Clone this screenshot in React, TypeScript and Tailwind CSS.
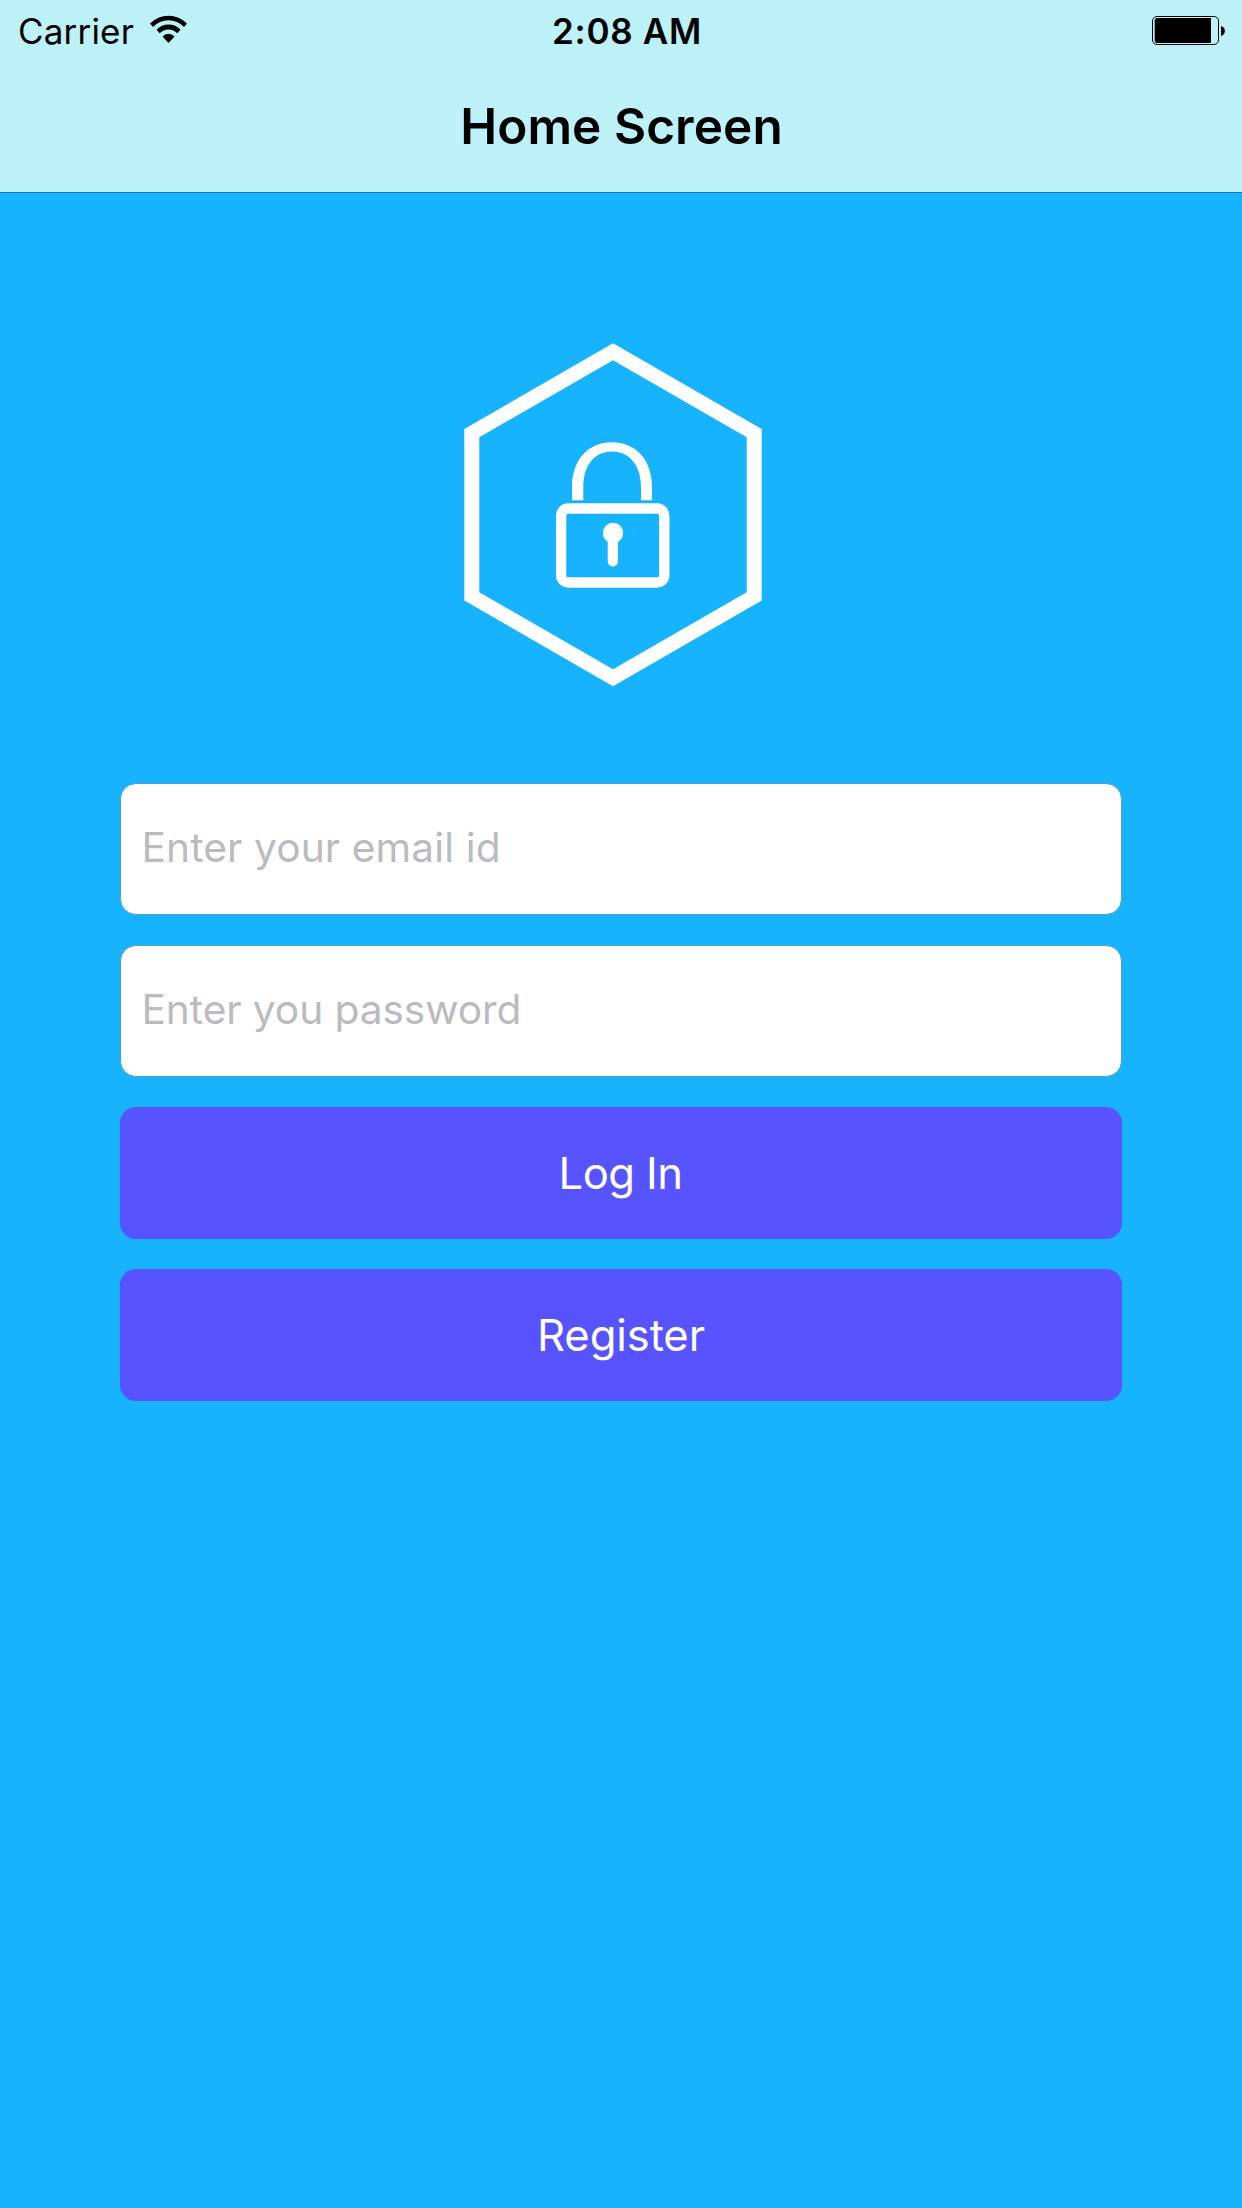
import React from 'react';

function WifiIcon() {
  return (
    <svg className="mt-[15px] ml-[15px] h-[29px] w-[39px]" viewBox="149 15 39 29" fill="#000">
      <path d="M150 23.5A25.8 25.8 0 0 1 187 23.5L184 27A21.2 21.2 0 0 0 153 27Z" />
      <path d="M156.5 29.8A16 16 0 0 1 180.5 29.8L177.3 33.3A12 12 0 0 0 159.7 33.3Z" />
      <path d="M162.5 36.5A8 8 0 0 1 174.5 36.5L168.5 43Z" />
    </svg>
  );
}

function BatteryIcon() {
  return (
    <svg className="mt-[15px] mr-4 h-[31px] w-[75px]" viewBox="1151 15 75 31" fill="#000">
      <rect x="1152.5" y="16.5" width="66" height="28" rx="4.5" fill="none" stroke="#000" />
      <path d="M1157 18H1211V43H1157Q1154.7 43 1154.7 40.5V20.5Q1154.7 18 1157 18Z" />
      <path d="M1221 26C1226.2 27.2 1226.2 34.8 1221 36Z" />
    </svg>
  );
}

function LockBadge() {
  return (
    <svg className="mr-4 h-[346px] w-[302px]" viewBox="462 342 302 346" fill="#fff">
      <path
        fillRule="evenodd"
        d="M613 343.3L761.7 429V600.5L613 686.3L464.3 600.5V429ZM613 360.3L479.3 437.3V592.3L613 669.3L746.7 592.3V437.3Z"
      />
      <path d="M572 500.3V487C572 460 588 442.2 612 442.2C636 442.2 652 460 652 487V500.3H641V487C641 466 630 451.5 612 451.5C594 451.5 583.3 466 583.3 487V500.3Z" />
      <rect x="561.1" y="508.5" width="103.2" height="74" rx="7" fill="none" stroke="#fff" strokeWidth="10.3" />
      <circle cx="613" cy="533" r="10.2" />
      <rect x="607.7" y="533" width="10.3" height="33.5" rx="5.1" />
    </svg>
  );
}

function Field({ label }: { label: string }) {
  return (
    <div className="h-[132px] rounded-[16px] border border-[#4aa3c8] bg-white pt-[39px] pl-[20.5px] text-[40.7px] leading-[49px] text-[#bbbac1]">
      {label}
    </div>
  );
}

function Button({ children, className = '' }: { children: React.ReactNode; className?: string }) {
  return (
    <button
      className={
        'block h-[132px] rounded-[16px] bg-[#5653ff] pt-px text-center text-[43.6px] leading-[53px] text-white ' +
        className
      }
    >
      {children}
    </button>
  );
}

export default function App() {
  return (
    <div className="flex h-[2208px] w-[1242px] flex-col overflow-hidden bg-[#17b3ff] font-['Inter',sans-serif]">
      <header className="h-[193px] shrink-0 border-b border-[#1478a8] bg-[#bbf1f7] text-black">
        <div className="grid h-[60px] grid-cols-[1fr_auto_1fr] items-start">
          <div className="flex items-start pl-[18px]">
            <span className="pt-2.5 text-[35px] leading-[42px] tracking-[0.19px]">Carrier</span>
            <WifiIcon />
          </div>
          <span className="pt-2.5 pl-3 text-[35px] leading-[42px] font-semibold tracking-[0.71px]">2:08 AM</span>
          <div className="flex justify-end">
            <BatteryIcon />
          </div>
        </div>
        <h1 className="pt-9 pl-px text-center text-[49.5px] leading-[60px] font-semibold tracking-[0.08px]">
          Home Screen
        </h1>
      </header>
      <main className="flex flex-col items-center pt-[149px]">
        <LockBadge />
        <form className="mt-[95px] flex w-[1002px] flex-col gap-[30px]">
          <div className="tracking-[0.1px]">
            <Field label="Enter your email id" />
          </div>
          <div className="tracking-[-0.09px]">
            <Field label="Enter you password" />
          </div>
          <Button className="pr-px tracking-[-0.58px]">Log In</Button>
          <Button className="tracking-[-0.1px]">Register</Button>
        </form>
      </main>
    </div>
  );
}
